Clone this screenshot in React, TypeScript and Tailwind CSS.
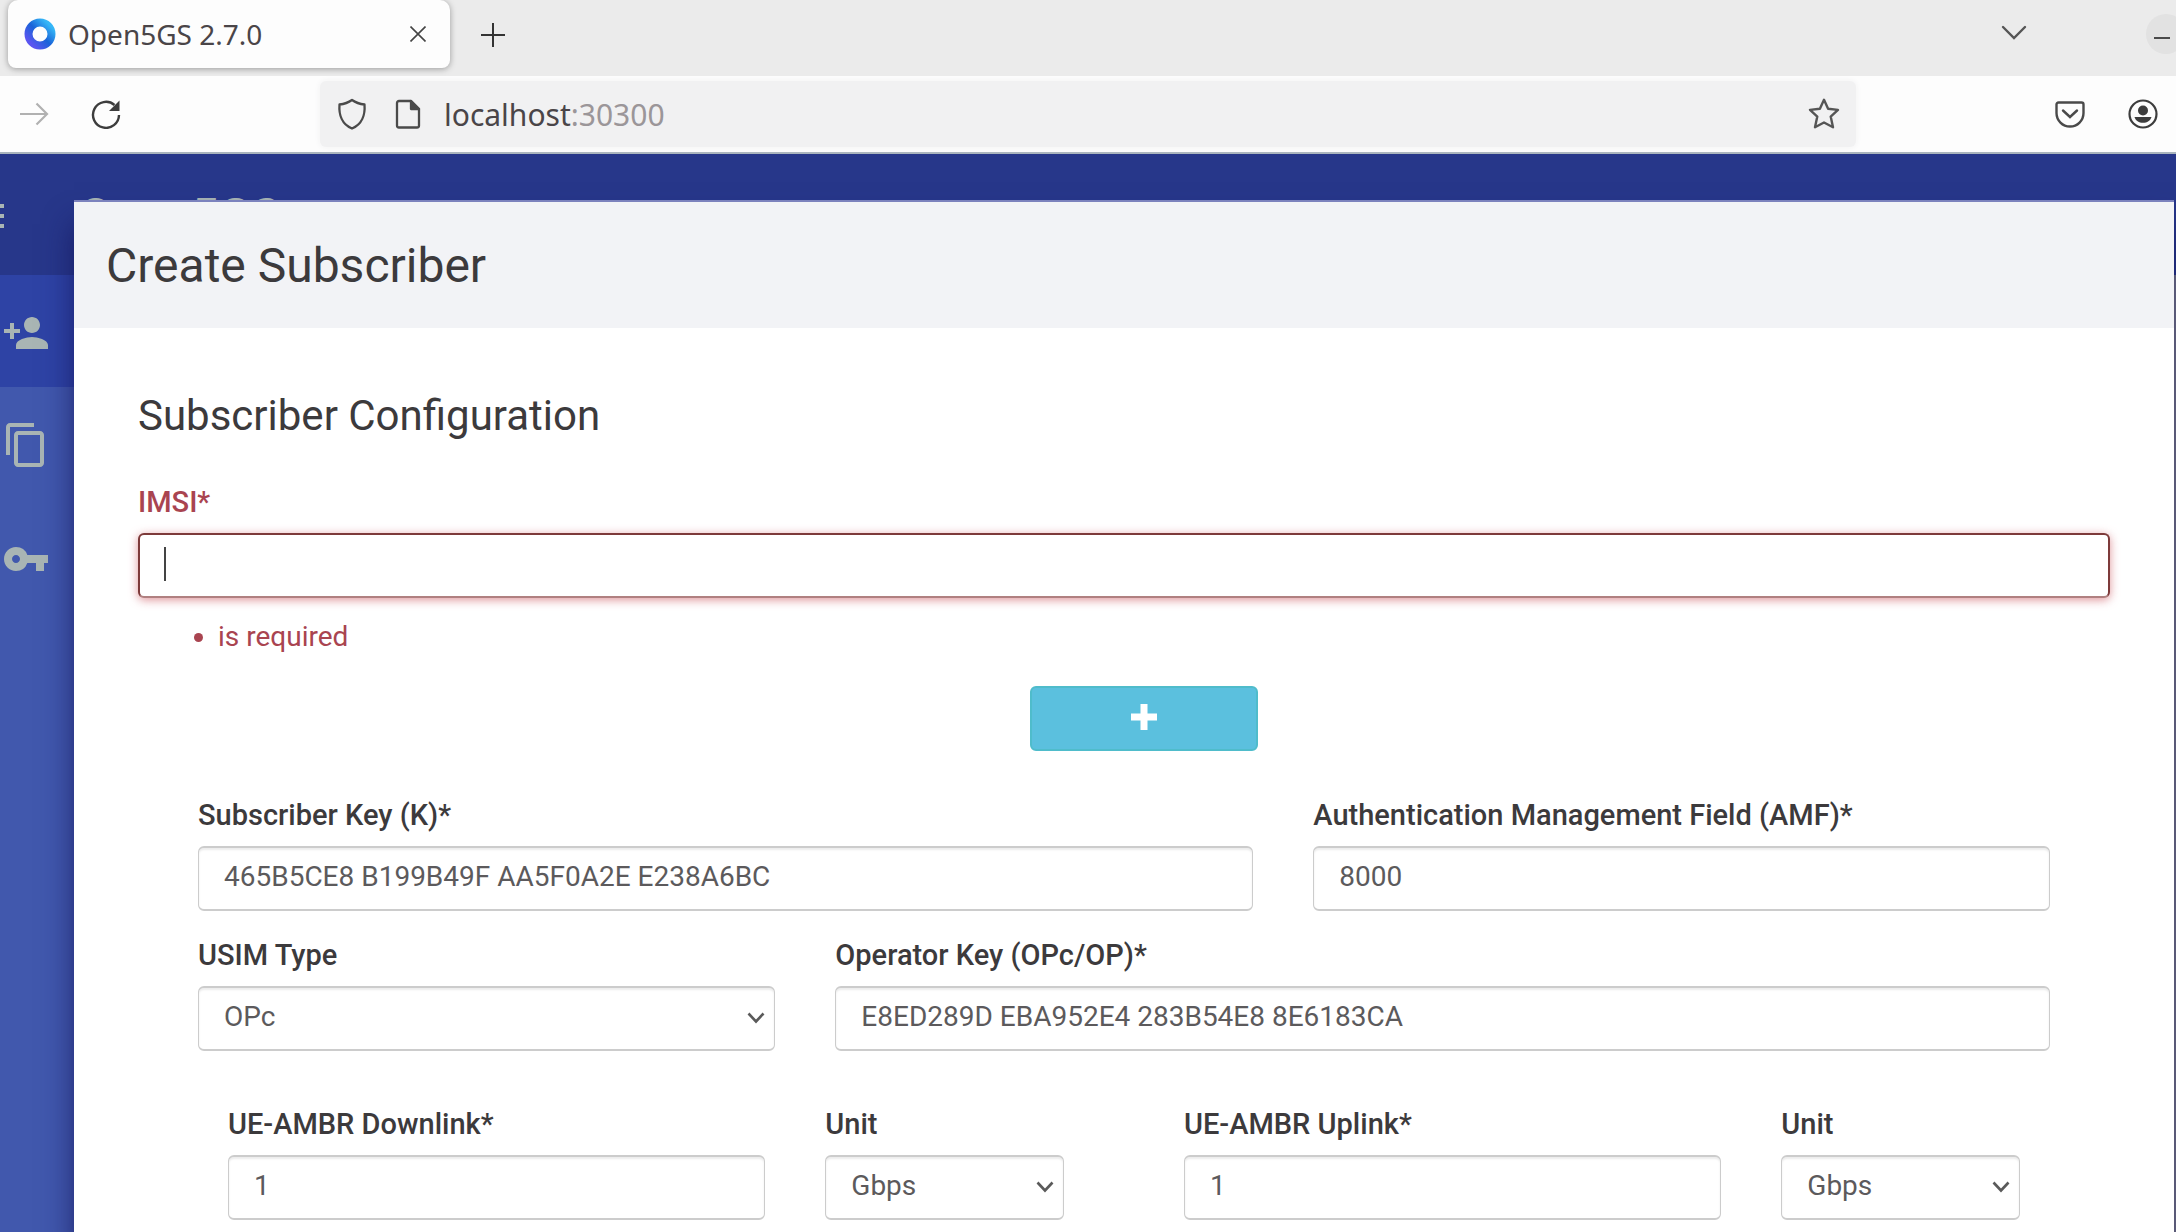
import { useId, type ReactNode } from "react";
import { MdContentCopy, MdPersonAdd, MdVpnKey } from "react-icons/md";

const fieldClass =
  "block h-[65px] w-full rounded-[6px] border-2 border-x border-[#cccccc] bg-white pb-1 pl-[25px] pr-3 text-[28px] leading-9 text-[#5c5a5c] shadow-[inset_0_2px_2px_rgba(0,0,0,0.08)] outline-none";

function Label({ htmlFor, children }: { htmlFor: string; children: ReactNode }) {
  return (
    <label htmlFor={htmlFor} className="mb-[11px] block text-[29px] font-medium leading-10 text-[#3c3a3c]">
      {children}
    </label>
  );
}

function TextField({ label, value, className }: { label: string; value: string; className: string }) {
  const id = useId();
  return (
    <div className={className}>
      <Label htmlFor={id}>{label}</Label>
      <input id={id} type="text" defaultValue={value} className={fieldClass} />
    </div>
  );
}

function SelectField({ label, options, className }: { label: string; options: string[]; className: string }) {
  const id = useId();
  return (
    <div className={className}>
      <Label htmlFor={id}>{label}</Label>
      <div className="relative">
        <select id={id} className={`${fieldClass} appearance-none`}>
          {options.map((option) => (
            <option key={option}>{option}</option>
          ))}
        </select>
        <svg
          viewBox="0 0 18 12"
          className="pointer-events-none absolute right-2.5 top-[26px] h-3 w-[18px]"
          fill="none"
          stroke="#5a5a5a"
          strokeWidth="2.600"
          aria-hidden="true"
        >
          <path d="M1.500 1.500 9 9.500l7.500-8" />
        </svg>
      </div>
    </div>
  );
}

function Favicon() {
  return (
    <svg viewBox="0 0 32 32" className="size-8" aria-hidden="true">
      <defs>
        <linearGradient id="ring" x1="0.9" y1="0.1" x2="0.1" y2="0.9">
          <stop offset="0" stopColor="#35b6f7" />
          <stop offset="0.5" stopColor="#1a63d8" />
          <stop offset="1" stopColor="#5a55f0" />
        </linearGradient>
      </defs>
      <circle cx="16" cy="16" r="11.500" fill="none" stroke="url(#ring)" strokeWidth="8" />
    </svg>
  );
}

function TabStrip() {
  return (
    <div className="flex h-[76px] items-start bg-[#ebebeb] pl-2">
      <div className="flex h-[68px] w-[442px] items-center rounded-b-[8px] rounded-t-[10px] bg-[#fdfdfd] px-4 shadow-[0_1px_6px_rgba(0,0,0,0.35)]">
        <Favicon />
        <span className="ml-3 flex-1 text-[28px] leading-9 text-[#4a4548]">Open5GS 2.7.0</span>
        <button type="button" aria-label="Close tab" className="flex size-8 items-center justify-center">
          <svg viewBox="0 0 16 16" className="size-4" stroke="#444" strokeWidth="1.600" aria-hidden="true">
            <path d="M0.500 0.500l15 15M15.500 0.500l-15 15" />
          </svg>
        </button>
      </div>
      <button type="button" aria-label="New tab" className="ml-[27px] flex h-[70px] w-8 items-center justify-center">
        <svg viewBox="0 0 24 24" className="size-6" stroke="#333" strokeWidth="2" aria-hidden="true">
          <path d="M12 0v24M0 12h24" />
        </svg>
      </button>
      <button type="button" aria-label="List all tabs" className="ml-auto flex h-[66px] w-8 items-center justify-center">
        <svg viewBox="0 0 26 16" className="h-4 w-[26px]" fill="none" stroke="#555" strokeWidth="2.400" aria-hidden="true">
          <path d="M2 2l11 11L24 2" strokeLinecap="round" />
        </svg>
      </button>
      <div className="ml-[112px] flex w-[34px] items-start overflow-hidden pb-2 pl-1 pt-3.5">
        <button
          type="button"
          aria-label="Minimize"
          className="flex size-10 shrink-0 items-center justify-center rounded-full bg-[#e2e2e2] pr-2"
        >
          <span className="mt-2 h-0.5 w-4 bg-[#4a4a4a]" />
        </button>
      </div>
    </div>
  );
}

function Toolbar() {
  return (
    <div className="flex h-[78px] items-center border-b-2 border-[#a9b4bd] bg-[#fdfdfd] pl-[18px] pr-[17px]">
      <button type="button" aria-label="Forward" className="flex size-8 items-center justify-center">
        <svg viewBox="0 0 30 24" className="h-6 w-[30px]" fill="none" stroke="#b1b1b1" strokeWidth="2.200" aria-hidden="true">
          <path d="M1 12h27M17.500 1.500L28 12 17.500 22.500" />
        </svg>
      </button>
      <button type="button" aria-label="Reload" className="ml-10 flex size-8 items-center justify-center">
        <svg viewBox="0 0 30 30" className="size-[30px]" fill="none" stroke="#3d3d3d" strokeWidth="2.400" aria-hidden="true">
          <path d="M28 16a13 13 0 1 1-4.500-10" />
          <path d="M28.500 1.500v10.500H18z" fill="#3d3d3d" stroke="none" />
        </svg>
      </button>
      <div className="ml-[198px] flex h-[66px] flex-1 items-center rounded-[6px] bg-[#f1f1f2] px-4 shadow-[0_0_6px_#f1f1f2]">
        <svg viewBox="0 0 32 32" className="size-8" fill="none" stroke="#4a4a4a" strokeWidth="2.300" strokeLinejoin="round" aria-hidden="true">
          <path d="M16 2c3.500 2.500 7.500 4 12.500 4.500 0.800 10-2.500 20-12.500 24C6 26.500 2.700 16.500 3.500 6.500 8.500 6 12.500 4.500 16 2z" />
        </svg>
        <svg viewBox="0 0 26 30" className="ml-[27px] h-[30px] w-[26px]" fill="none" stroke="#4a4a4a" strokeWidth="2.300" strokeLinejoin="round" aria-hidden="true">
          <path d="M4 2h12l8 8v16.500a2 2 0 0 1-2 2H4a2 2 0 0 1-2-2V4a2 2 0 0 1 2-2z" />
          <path d="M16 2v8h8z" fill="#4a4a4a" />
        </svg>
        <div role="textbox" aria-label="Address" className="ml-[23px] flex-1 pt-0.5 text-[30px] leading-9 text-[#4a4548]">
          localhost<span className="text-[#9b9699]">:30300</span>
        </div>
        <button type="button" aria-label="Bookmark this page" className="flex size-8 items-center justify-center">
          <svg viewBox="0 0 32 32" className="size-8" fill="none" stroke="#555" strokeWidth="2.400" strokeLinejoin="round" aria-hidden="true">
            <path d="M16 1.800l4.100 9 9.900 1.100-7.300 6.700 2.300 10.700L16 24.500l-9 4.800 2.300-10.700L2 11.900l9.900-1.100z" />
          </svg>
        </button>
      </div>
      <button type="button" aria-label="Save to Pocket" className="ml-[198px] flex size-8 items-center justify-center">
        <svg viewBox="0 0 30 27" className="h-[27px] w-[30px]" fill="none" stroke="#4a4a4a" strokeWidth="2.400" aria-hidden="true">
          <path d="M3.500 1.500h23a2 2 0 0 1 2 2V12a13.500 13.500 0 0 1-27 0V3.500a2 2 0 0 1 2-2z" />
          <path d="M8 9.500l7 6.500 7-6.500" strokeLinecap="round" />
        </svg>
      </button>
      <button type="button" aria-label="Account" className="ml-[41px] flex size-8 items-center justify-center">
        <svg viewBox="0 0 32 32" className="size-8" fill="none" stroke="#3d3d3d" strokeWidth="2.200" aria-hidden="true">
          <circle cx="16" cy="16" r="13.500" />
          <circle cx="16" cy="12.500" r="5" fill="#3d3d3d" stroke="none" />
          <path d="M7.500 19h17c-1 3.600-4.500 5.800-8.500 5.800S8.500 22.600 7.500 19z" fill="#3d3d3d" stroke="none" />
        </svg>
      </button>
    </div>
  );
}

function Sidebar() {
  return (
    <nav aria-label="Main" className="flex w-40 flex-col bg-[#4158ad] text-[#a9b5b4]">
      <a href="#subscriber" aria-label="Subscriber" className="flex h-28 items-center bg-[#2e43a5] pl-0.5 pt-1">
        <MdPersonAdd className="size-12" />
      </a>
      <a href="#profile" aria-label="Profile" className="flex h-[114px] items-center pl-0.5 pt-0.5">
        <MdContentCopy className="size-12" />
      </a>
      <a href="#account" aria-label="Account" className="flex h-[114px] items-center pl-0.5 pt-0.5">
        <MdVpnKey className="size-12" />
      </a>
    </nav>
  );
}

function Ambr({ label }: { label: string }) {
  return (
    <div className="grid grid-cols-3 gap-[60px] px-[30px]">
      <TextField label={label} value="1" className="col-span-2" />
      <SelectField label="Unit" options={["Gbps", "Mbps", "Kbps", "bps"]} className="" />
    </div>
  );
}

function SubscriberDialog() {
  return (
    <section
      role="dialog"
      aria-labelledby="dialog-title"
      className="absolute bottom-0 left-[74px] right-0.5 top-[46px] overflow-hidden border-t-2 border-[#7c82bd] bg-white shadow-[0_24px_28px_rgba(20,20,90,0.75)]"
    >
      <header className="bg-[#f2f3f6] pb-[35px] pl-8 pt-[37px]">
        <h1 id="dialog-title" className="text-[48px] leading-[54px] text-[#3c3a3c]">
          Create Subscriber
        </h1>
      </header>
      <form className="px-16 pt-[58px]">
        <h2 className="text-[42px] leading-[60px] text-[#3c3a3c]">Subscriber Configuration</h2>
        <label htmlFor="imsi" className="mb-[11px] mt-9 block text-[29px] font-medium leading-10 text-[#a94450]">
          IMSI*
        </label>
        <div className="relative">
          <input
            id="imsi"
            type="text"
            aria-invalid="true"
            aria-describedby="imsi-error"
            className="block h-[65px] w-full rounded-[6px] border-2 border-[#7d3a3a] border-b-[#b08080] bg-white px-6 text-[28px] caret-transparent shadow-[0_2px_10px_rgba(206,90,100,0.65)] outline-none"
          />
          <span className="absolute left-[26px] top-3.5 h-[34px] w-0.5 bg-[#444444]" />
        </div>
        <ul id="imsi-error" className="mt-[19px] list-disc pl-20 text-[28px] leading-10 text-[#a94450]">
          <li>is required</li>
        </ul>
        <div className="mt-[29px] flex justify-center pl-10">
          <button
            type="button"
            aria-label="Add IMSI"
            className="flex h-[65px] w-[228px] items-center justify-center rounded-[6px] border-2 border-[#4fbccb] bg-[#5bc0de] pb-1"
          >
            <svg viewBox="0 0 26 26" className="size-[26px]" fill="#ffffff" aria-hidden="true">
              <path d="M9.500 0h7v9.500H26v7h-9.500V26h-7v-9.500H0v-7h9.500z" />
            </svg>
          </button>
        </div>
        <div className="px-[60px] pt-11">
          <div className="grid grid-cols-12 gap-x-[60px] gap-y-6">
            <TextField label="Subscriber Key (K)*" value="465B5CE8 B199B49F AA5F0A2E E238A6BC" className="col-span-7" />
            <TextField label="Authentication Management Field (AMF)*" value="8000" className="col-span-5" />
            <SelectField label="USIM Type" options={["OPc", "OP"]} className="col-span-4" />
            <TextField label="Operator Key (OPc/OP)*" value="E8ED289D EBA952E4 283B54E8 8E6183CA" className="col-span-8" />
          </div>
          <div className="grid grid-cols-2 gap-[60px] pt-[53px]">
            <Ambr label="UE-AMBR Downlink*" />
            <Ambr label="UE-AMBR Uplink*" />
          </div>
        </div>
      </form>
    </section>
  );
}

export default function App() {
  return (
    <div className="flex h-screen flex-col overflow-hidden">
      <div className="font-['Noto_Sans',sans-serif]">
        <TabStrip />
        <Toolbar />
      </div>
      <div className="relative flex min-h-0 flex-1 flex-col overflow-hidden bg-[#808088] font-[Roboto,sans-serif]">
        <header className="flex h-[121px] shrink-0 items-start bg-[#27378a] pt-[34px] text-[#a9b5b4]">
          <button type="button" aria-label="Menu" className="mt-4 flex w-1 flex-col gap-1.5">
            <span className="h-1 w-1 bg-current" />
            <span className="h-1 w-1 bg-current" />
            <span className="h-1 w-1 bg-current" />
          </button>
          <span className="ml-[75px] text-[48px] font-medium leading-[56px]">Open5GS</span>
        </header>
        <div className="flex min-h-0 flex-1">
          <Sidebar />
        </div>
        <SubscriberDialog />
      </div>
    </div>
  );
}
